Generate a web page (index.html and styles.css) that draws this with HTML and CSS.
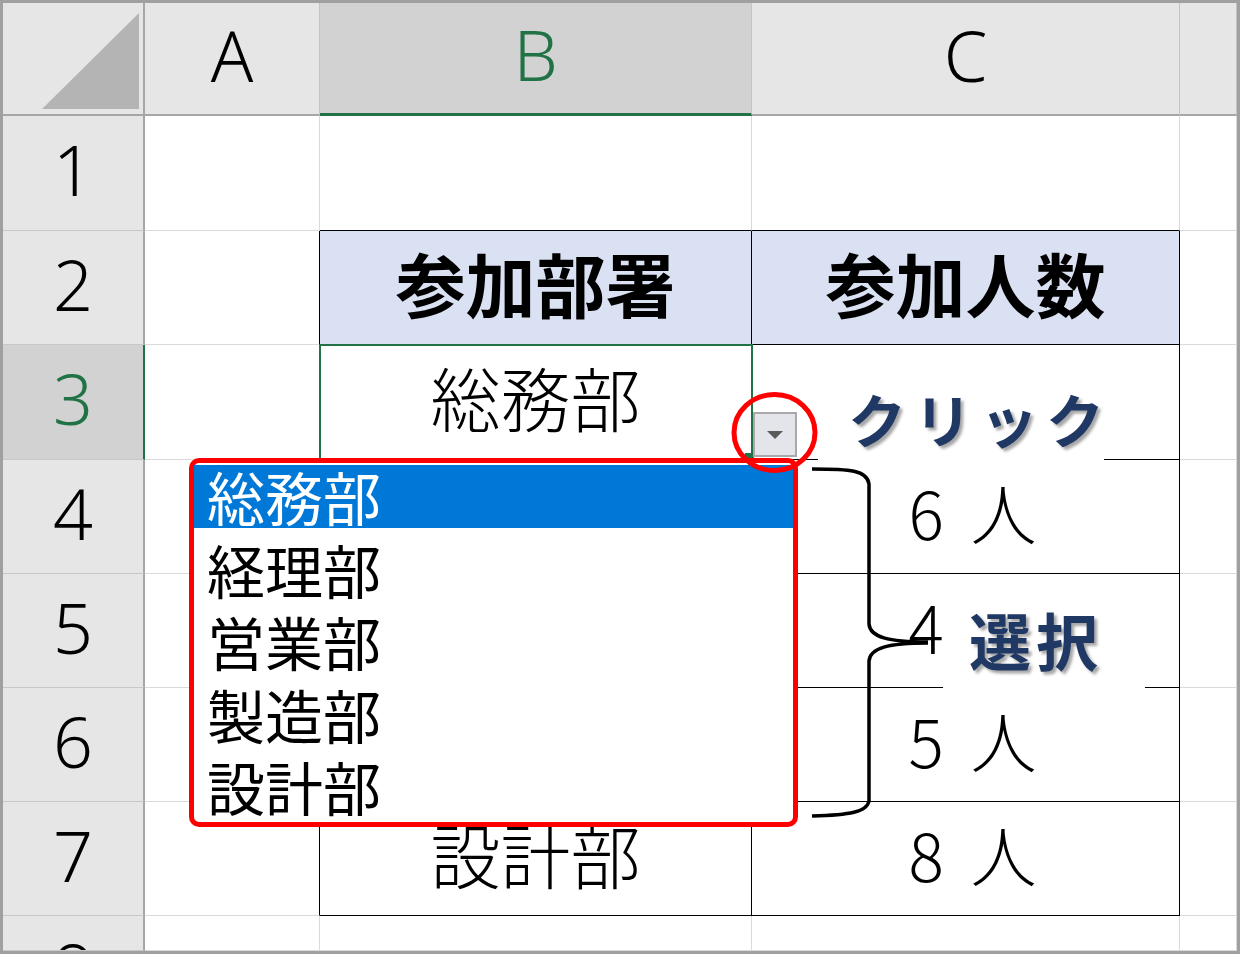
FILE: index.html
```html
<!DOCTYPE html>
<html lang="ja">
<head>
    <meta charset="UTF-8">
    <title>ドロップダウンリスト</title>
    <link rel="stylesheet" href="styles.css">
</head>
<body>
<div class="sheet">
    <!-- column headers -->
    <div class="corner"><div class="tri"></div></div>
    <div class="ch">A</div>
    <div class="ch on">B</div>
    <div class="ch">C</div>
    <div class="ch"></div>

    <!-- row 1 -->
    <div class="rh">1</div>
    <div class="cell"></div>
    <div class="cell tt"></div>
    <div class="cell tt"></div>
    <div class="cell"></div>

    <!-- row 2 -->
    <div class="rh">2</div>
    <div class="cell tl"></div>
    <div class="cell tb th">参加部署</div>
    <div class="cell tb th">参加人数</div>
    <div class="cell"></div>

    <!-- row 3 -->
    <div class="rh on">3</div>
    <div class="cell tl"></div>
    <div class="cell tb sel">総務部</div>
    <div class="cell tb num">7 人</div>
    <div class="cell"></div>

    <!-- row 4 -->
    <div class="rh">4</div>
    <div class="cell tl"></div>
    <div class="cell tb">経理部</div>
    <div class="cell tb num">6 人</div>
    <div class="cell"></div>

    <!-- row 5 -->
    <div class="rh">5</div>
    <div class="cell tl"></div>
    <div class="cell tb">営業部</div>
    <div class="cell tb num">4 人</div>
    <div class="cell"></div>

    <!-- row 6 -->
    <div class="rh">6</div>
    <div class="cell tl"></div>
    <div class="cell tb">製造部</div>
    <div class="cell tb num">5 人</div>
    <div class="cell"></div>

    <!-- row 7 -->
    <div class="rh">7</div>
    <div class="cell tl"></div>
    <div class="cell tb">設計部</div>
    <div class="cell tb num">8 人</div>
    <div class="cell"></div>

    <!-- row 8 (cut off) -->
    <div class="rh cut">8</div>
    <div class="cell"></div>
    <div class="cell"></div>
    <div class="cell"></div>
    <div class="cell"></div>

    <!-- overlays -->
    <div class="handle"></div>
    <div class="ddbtn"><span class="arrow"></span></div>

    <ul class="dd">
        <li class="active">総務部</li>
        <li>経理部</li>
        <li>営業部</li>
        <li>製造部</li>
        <li>設計部</li>
    </ul>

    <div class="note note-click">クリック</div>
    <div class="note note-pick">選択</div>

    <svg class="marks" viewBox="3 3 1234 948" width="1234" height="948">
        <ellipse cx="774.5" cy="432.5" rx="40.5" ry="38" fill="none" stroke="#ff0000" stroke-width="5"/>
        <path d="M812 469 C850 469 867 470 869 484 L869 624 C870 637 888 642 928 642 M928 643 C888 643 870 648 869 661 L869 801 C867 812 850 815 812 816" fill="none" stroke="#000" stroke-width="3.5"/>
    </svg>
</div>
</body>
</html>
```

FILE: styles.css
```css
body {
    margin: 0;
    background-color: #ffffff;
    overflow: hidden;
}
.sheet {
    position: relative;
    width: 1240px;
    height: 954px;
    box-sizing: border-box;
    border: 3px solid #a0a0a0;
    display: grid;
    grid-template-columns: 142px 175px 432px 428px 1fr;
    grid-template-rows: 113px 115px 114px 115px 114px 114px 114px 114px 1fr;
    font-family: "Noto Sans CJK JP", sans-serif;
    color: #000;
    overflow: hidden;
}

/* headers */
.corner,
.ch,
.rh {
    background-color: #e6e6e6;
    display: flex;
    align-items: center;
    justify-content: center;
    box-sizing: border-box;
    padding-bottom: 8px;
    font-family: "Noto Sans", "Noto Sans CJK JP", sans-serif;
    font-weight: 300;
    font-size: 70px;
    line-height: 1;
}
.corner {
    justify-content: flex-end;
    align-items: flex-end;
    padding: 0 4px 5px 0;
    border-right: 2px solid #a6a6a6;
    border-bottom: 2px solid #a6a6a6;
}
.tri {
    width: 97px;
    height: 96px;
    background-color: #b4b4b4;
    clip-path: polygon(100% 0, 100% 100%, 0 100%);
}
.ch {
    border-right: 1px solid #c4c4c4;
    border-bottom: 2px solid #a6a6a6;
}
.ch.on {
    background-color: #d2d2d2;
    color: #217346;
    border-bottom: 3px solid #217346;
}
.rh {
    border-right: 2px solid #a6a6a6;
    border-bottom: 1px solid #c8c8c8;
}
.rh.on {
    background-color: #d2d2d2;
    color: #217346;
    border-right-color: #217346;
}
.rh.cut {
    align-items: flex-start;
    padding: 17px 0 0;
    overflow: hidden;
}

/* cells */
.cell {
    display: flex;
    align-items: center;
    justify-content: center;
    box-sizing: border-box;
    padding-bottom: 10px;
    border-right: 1px solid #dadada;
    border-bottom: 1px solid #dadada;
    font-size: 70px;
    font-weight: 300;
    line-height: 1;
    white-space: nowrap;
}
.cell.tt {
    border-bottom-color: #000;
}
.cell.tl {
    border-right-color: #000;
}
.cell.tb {
    border-right-color: #000;
    border-bottom-color: #000;
}
.cell.th {
    background-color: #d9e1f2;
    font-size: 70px;
    font-weight: 700;
}
.cell.num {
    font-size: 66px;
    letter-spacing: 6px;
    padding-left: 20px;
    padding-bottom: 12px;
}
.cell.sel {
    position: relative;
    outline: 2px solid #217346;
    outline-offset: -1px;
}

/* data validation dropdown */
.handle {
    position: absolute;
    left: 742px;
    top: 450px;
    width: 9px;
    height: 8px;
    background-color: #217346;
}
.ddbtn {
    position: absolute;
    left: 750px;
    top: 409px;
    width: 44px;
    height: 45px;
    box-sizing: border-box;
    background-color: #e3e5ea;
    border: 2px solid #a9a9a9;
    display: flex;
    align-items: center;
    justify-content: center;
}
.arrow {
    width: 0;
    height: 0;
    border-left: 8px solid transparent;
    border-right: 8px solid transparent;
    border-top: 8px solid #5a5a5a;
}
.dd {
    position: absolute;
    left: 186px;
    top: 455px;
    width: 609px;
    height: 369px;
    box-sizing: border-box;
    margin: 0;
    padding: 2px 0 0;
    list-style: none;
    background-color: #ffffff;
    border: 5px solid #ff0000;
    border-radius: 10px;
    display: flex;
    flex-direction: column;
    gap: 10px;
}
.dd li {
    height: 62.5px;
    display: flex;
    align-items: center;
    padding-left: 13px;
    font-size: 58px;
    line-height: 1;
}
.dd li.active {
    background-color: #0078d7;
    color: #ffffff;
}

/* callouts */
.note {
    position: absolute;
    background-color: #ffffff;
    display: flex;
    align-items: center;
    box-sizing: border-box;
    color: #203864;
    font-weight: 700;
    line-height: 1;
    text-shadow: 3px 3px 3px rgba(0, 0, 0, 0.35);
    white-space: nowrap;
}
.note-click {
    left: 815px;
    top: 369px;
    width: 286px;
    height: 91px;
    padding-left: 30px;
    font-size: 58px;
    letter-spacing: 8px;
}
.note-pick {
    left: 940px;
    top: 589px;
    width: 202px;
    height: 100px;
    padding: 0 0 6px 26px;
    font-size: 62px;
    letter-spacing: 5px;
}
.marks {
    position: absolute;
    left: 0;
    top: 0;
}
```
